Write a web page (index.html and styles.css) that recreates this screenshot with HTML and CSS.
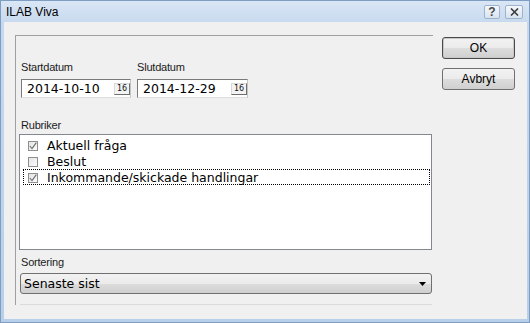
FILE: index.html
```html
<!DOCTYPE html>
<html lang="sv">
<head>
<meta charset="utf-8">
<title>ILAB Viva</title>
<link rel="stylesheet" href="styles.css">
</head>
<body>
<div class="window">
  <div class="titlebar">
    <span class="title">ILAB Viva</span>
    <div class="tbtns">
      <span class="tbtn">?</span>
      <span class="tbtn close"><svg width="9" height="8" viewBox="0 0 9 8"><path d="M1 0.5 L8 7.5 M8 0.5 L1 7.5" stroke="#3c3c3c" stroke-width="1.6" fill="none"/></svg></span>
    </div>
  </div>
  <div class="client">
    <div class="panel">
      <div class="dates">
        <div class="field f1">
          <div class="label">Startdatum</div>
          <div class="datebox"><span class="dtext">2014-10-10</span><span class="cal">16</span></div>
        </div>
        <div class="field f2">
          <div class="label">Slutdatum</div>
          <div class="datebox"><span class="dtext">2014-12-29</span><span class="cal">16</span></div>
        </div>
      </div>
      <div class="label rub">Rubriker</div>
      <div class="list">
        <div class="row"><span class="cb"><svg width="8" height="8" viewBox="0 0 8 8"><path d="M0.8 4 L3 6.6 L7.3 0.6" stroke="#6a6a6a" stroke-width="1.1" fill="none"/></svg></span>Aktuell fråga</div>
        <div class="row"><span class="cb"></span>Beslut</div>
        <div class="row focus"><span class="cb"><svg width="8" height="8" viewBox="0 0 8 8"><path d="M0.8 4 L3 6.6 L7.3 0.6" stroke="#6a6a6a" stroke-width="1.1" fill="none"/></svg></span>Inkommande/skickade handlingar</div>
      </div>
      <div class="label sort">Sortering</div>
      <div class="combo"><span class="ctext">Senaste sist</span><svg class="arrow" width="7" height="4" viewBox="0 0 7 4"><path d="M0 0 H7 L3.5 4 Z" fill="#000"/></svg></div>
      <div class="sep"></div>
    </div>
    <div class="buttons">
      <button class="btn default">OK</button>
      <button class="btn">Avbryt</button>
    </div>
  </div>
</div>
</body>
</html>
```
FILE: styles.css
```css
html, body {
  margin: 0;
  padding: 0;
}
body {
  width: 530px;
  height: 323px;
  overflow: hidden;
  font-family: "Liberation Sans", Arial, sans-serif;
}
.window {
  box-sizing: border-box;
  width: 530px;
  height: 323px;
  border: 1px solid #7f9dc3;
  background: linear-gradient(#c6d9ef, #b8cfe9);
  display: flex;
  flex-direction: column;
}
.titlebar {
  height: 21px;
  flex: none;
  display: flex;
  align-items: center;
  padding: 0 6px 0 5px;
  background: linear-gradient(#d9e6f5, #c8daef);
}
.title {
  flex: 1;
  font-size: 12px;
  color: #000;
}
.tbtns {
  display: flex;
  gap: 5px;
  align-self: flex-start;
  margin-top: 4px;
}
.tbtn {
  box-sizing: border-box;
  width: 16px;
  height: 14px;
  border: 1px solid #9fb2cb;
  border-radius: 2px;
  background: linear-gradient(#f5f8fc, #d8e3f0);
  display: flex;
  align-items: center;
  justify-content: center;
  font-size: 12px;
  font-weight: bold;
  color: #4a4a4a;
  line-height: 1;
}
.tbtn.close {
  width: 18px;
}
.client {
  flex: 1;
  margin: 0 2px 3px 3px;
  background: #f0f0f0;
  display: flex;
  align-items: flex-start;
  padding: 13px 0 0 11px;
}
.panel {
  box-sizing: border-box;
  width: 418px;
  border-left: 1px solid #a0a0a0;
  border-top: 1px solid #a0a0a0;
  padding-left: 3px;
}
.dates {
  display: flex;
  gap: 6px;
  margin: 24px 0 0 2px;
}
.f1 { width: 110px; }
.f2 { width: 111px; }
.label {
  font-size: 11px;
  line-height: 14px;
  letter-spacing: -0.2px;
  color: #1a1a1a;
}
.field .label {
  margin-bottom: 5px;
}
.datebox {
  box-sizing: border-box;
  height: 19px;
  display: flex;
  align-items: center;
  justify-content: space-between;
  background: #fff;
  border: 1px solid;
  border-color: #7a7a7a #c4c4c4 #dedede #7a7a7a;
  padding-left: 5px;
}
.dtext {
  font-family: "DejaVu Sans", Verdana, sans-serif;
  font-size: 12.5px;
  color: #000;
}
.cal {
  box-sizing: border-box;
  width: 16px;
  height: 12px;
  border: 1px solid;
  border-color: #d8d8d8 #6e6e6e #6e6e6e #d8d8d8;
  background: #f3f3f3;
  font-family: "DejaVu Sans", sans-serif;
  font-size: 8px;
  line-height: 10px;
  text-align: center;
  color: #111;
}
.rub {
  margin: 20px 0 0 2px;
}
.list {
  box-sizing: border-box;
  width: 413px;
  height: 116px;
  margin-top: 2px;
  background: #fff;
  border: 1px solid #828790;
  padding: 2px 1px 0 3px;
}
.row {
  box-sizing: border-box;
  height: 16px;
  border: 1px dotted transparent;
  display: flex;
  align-items: center;
  padding-left: 4px;
  font-family: "DejaVu Sans", Verdana, sans-serif;
  font-size: 12.5px;
  color: #000;
}
.row.focus {
  border-color: #000;
}
.cb {
  box-sizing: border-box;
  width: 10px;
  height: 10px;
  margin: 1px 9px 0 0;
  border: 1px solid #8f8f8f;
  background: linear-gradient(135deg, #e4e4e4, #fbfbfb);
  display: flex;
  align-items: center;
  justify-content: center;
  flex: none;
}
.cb svg {
  display: block;
}
.sort {
  margin: 5px 0 0 2px;
}
.combo {
  box-sizing: border-box;
  width: 412px;
  height: 21px;
  margin: 4px 0 0 1px;
  border: 1px solid #707070;
  border-radius: 3px;
  background: linear-gradient(#f2f2f2, #ebebeb 50%, #dddddd 50%, #cfcfcf);
  display: flex;
  align-items: center;
  justify-content: space-between;
  padding: 0 5px 0 3px;
}
.ctext {
  font-family: "DejaVu Sans", Verdana, sans-serif;
  font-size: 12.5px;
  color: #000;
}
.arrow {
  display: block;
}
.sep {
  width: 412px;
  height: 1px;
  margin: 10px 0 0 1px;
  background: #dadada;
}
.buttons {
  display: flex;
  flex-direction: column;
  gap: 9px;
  margin: 2px 0 0 9px;
}
.btn {
  box-sizing: border-box;
  width: 73px;
  height: 22px;
  padding: 0;
  border: 1px solid #707070;
  border-radius: 3px;
  background: linear-gradient(#f2f2f2, #ebebeb 50%, #dddddd 50%, #cfcfcf);
  font-family: "Liberation Sans", Arial, sans-serif;
  font-size: 12px;
  color: #000;
}
.btn.default {
  border-color: #4a4a4a;
  box-shadow: inset 0 0 0 1px #c8c8c8;
}
```
